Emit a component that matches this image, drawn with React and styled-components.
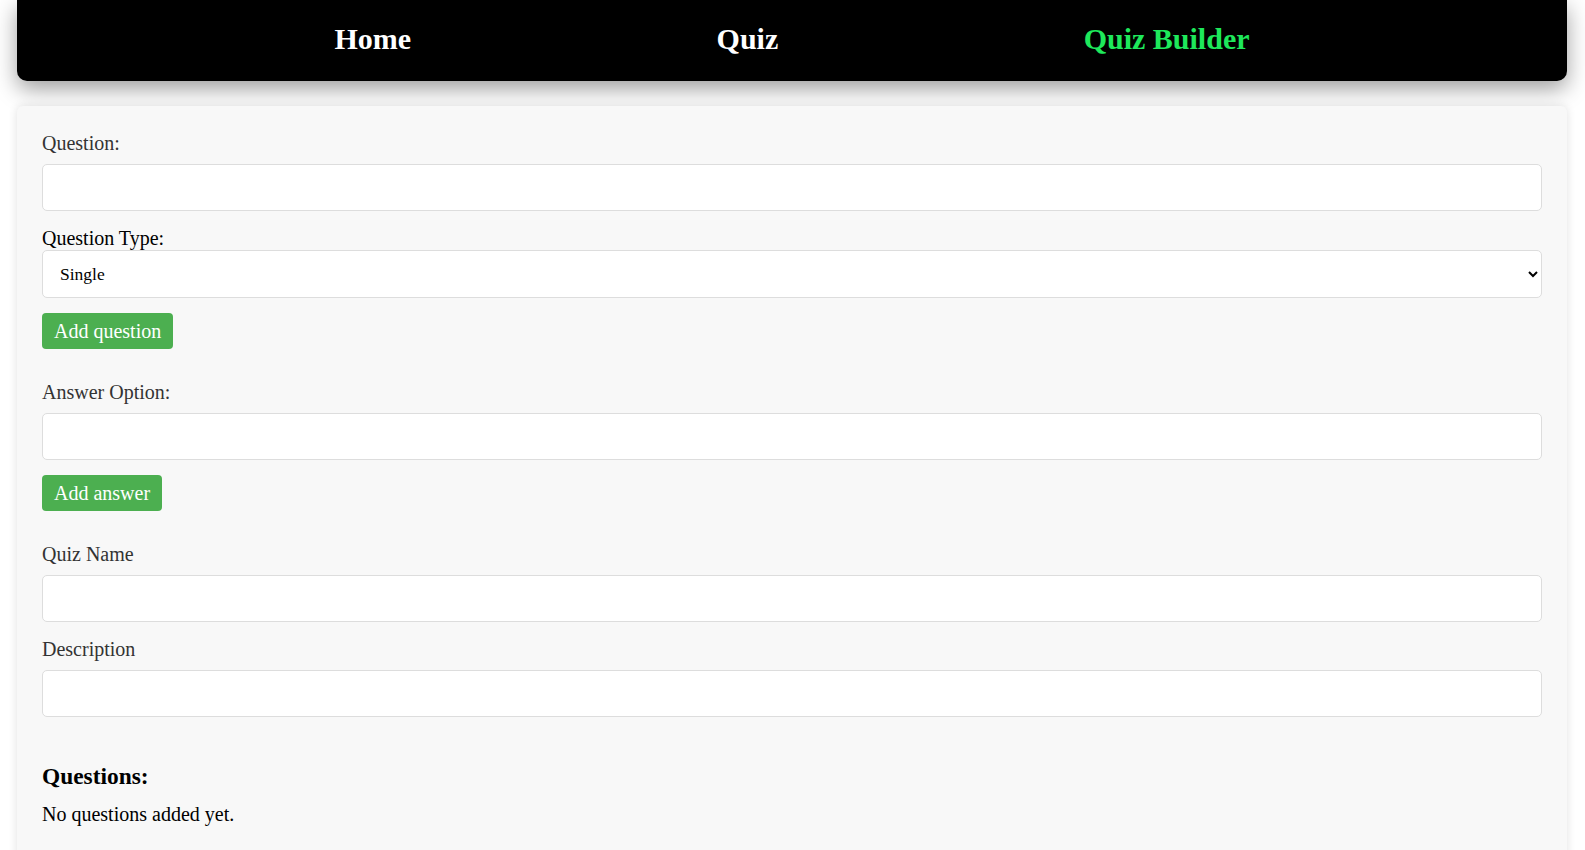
import styled, { createGlobalStyle } from 'styled-components';
import { useState } from 'react';

const GlobalStyle = createGlobalStyle`
  html, body {
    margin: 0;
    padding: 0;
    background: #fff;
  }

  body {
    font-family: "Liberation Serif", "Times New Roman", serif;
    font-size: 20px;
  }
`;

const Page = styled.div`
  padding: 0 18px 0 17px;
`;

const NavBar = styled.nav`
  height: 81px;
  display: flex;
  align-items: center;
  justify-content: space-evenly;
  padding: 0 12px 4px;
  box-sizing: border-box;
  background-color: #000;
  border-radius: 0 0 10px 10px;
  box-shadow: 0 8px 22px rgba(0, 0, 0, 0.38);
`;

const NavLink = styled.a`
  font-size: 30px;
  font-weight: bold;
  line-height: 34px;
  color: ${(props) => (props.$active ? '#1ee85b' : '#fff')};
  text-decoration: none;
  cursor: pointer;
`;

const Card = styled.div`
  margin-top: 25px;
  min-height: 760px;
  padding: 25px 25px 24px;
  display: flex;
  flex-direction: column;
  background-color: #f8f8f8;
  border-radius: 6px;
  box-shadow: 0 0 10px rgba(0, 0, 0, 0.12);
`;

const Form = styled.form`
  display: flex;
  flex-direction: column;
  align-items: flex-start;
`;

const Label = styled.label`
  display: block;
  font-size: 20px;
  line-height: 25px;
  color: #333;
  margin-bottom: 8px;
`;

const TypeLabel = styled.label`
  display: block;
  font-size: 20px;
  line-height: 24px;
  color: #000;
`;

const Input = styled.input`
  width: 100%;
  height: 47px;
  box-sizing: border-box;
  padding: 0 12px;
  margin: 0 0 15px;
  border: 1px solid #ddd;
  border-radius: 5px;
  background-color: #fff;
  font-family: inherit;
  font-size: 18px;
  outline: none;
`;

const Select = styled.select`
  width: 100%;
  height: 48px;
  box-sizing: border-box;
  padding: 0 10px 0 13px;
  margin: 0 0 15px;
  border: 1px solid #ddd;
  border-radius: 5px;
  background-color: #fff;
  color: #000;
  font-family: inherit;
  font-size: 17.5px;
`;

const Button = styled.button`
  height: 36px;
  padding: 0 12px;
  margin-bottom: ${(props) => props.$gap || 0}px;
  border: none;
  border-radius: 4px;
  background-color: #4caf50;
  color: #fff;
  font-family: inherit;
  font-size: 20px;
  line-height: 36px;
  cursor: pointer;
`;

const ListTitle = styled.h3`
  font-size: 23.4px;
  line-height: 27px;
  font-weight: bold;
  color: #000;
  margin: 31px 0 13px;
`;

const EmptyText = styled.p`
  font-size: 20px;
  line-height: 23px;
  color: #000;
  margin: 0;
`;

function App() {
  const [question, setQuestion] = useState('');
  const [questionType, setQuestionType] = useState('single');
  const [answer, setAnswer] = useState('');
  const [quizName, setQuizName] = useState('');
  const [description, setDescription] = useState('');
  const [questions, setQuestions] = useState([]);

  const handleAddQuestion = () => {
    if (!question) return;
    setQuestions([...questions, { text: question, type: questionType, answers: [] }]);
    setQuestion('');
  };

  const handleAddAnswer = () => {
    setAnswer('');
  };

  return (
    <Page>
      <GlobalStyle />
      <NavBar>
        <NavLink>Home</NavLink>
        <NavLink>Quiz</NavLink>
        <NavLink $active>Quiz Builder</NavLink>
      </NavBar>
      <Card>
        <Form onSubmit={(e) => e.preventDefault()}>
          <Label>Question:</Label>
          <Input value={question} onChange={(e) => setQuestion(e.target.value)} />
          <TypeLabel>Question Type:</TypeLabel>
          <Select value={questionType} onChange={(e) => setQuestionType(e.target.value)}>
            <option value="single">Single</option>
            <option value="multiple">Multiple</option>
          </Select>
          <Button type="button" $gap={31} onClick={handleAddQuestion}>Add question</Button>

          <Label>Answer Option:</Label>
          <Input value={answer} onChange={(e) => setAnswer(e.target.value)} />
          <Button type="button" $gap={31} onClick={handleAddAnswer}>Add answer</Button>

          <Label>Quiz Name</Label>
          <Input value={quizName} onChange={(e) => setQuizName(e.target.value)} />
          <Label>Description</Label>
          <Input value={description} onChange={(e) => setDescription(e.target.value)} />
        </Form>
        <ListTitle>Questions:</ListTitle>
        {questions.length === 0 ? (
          <EmptyText>No questions added yet.</EmptyText>
        ) : (
          questions.map((q, i) => <EmptyText key={i}>{q.text}</EmptyText>)
        )}
      </Card>
    </Page>
  );
}

export default App;
